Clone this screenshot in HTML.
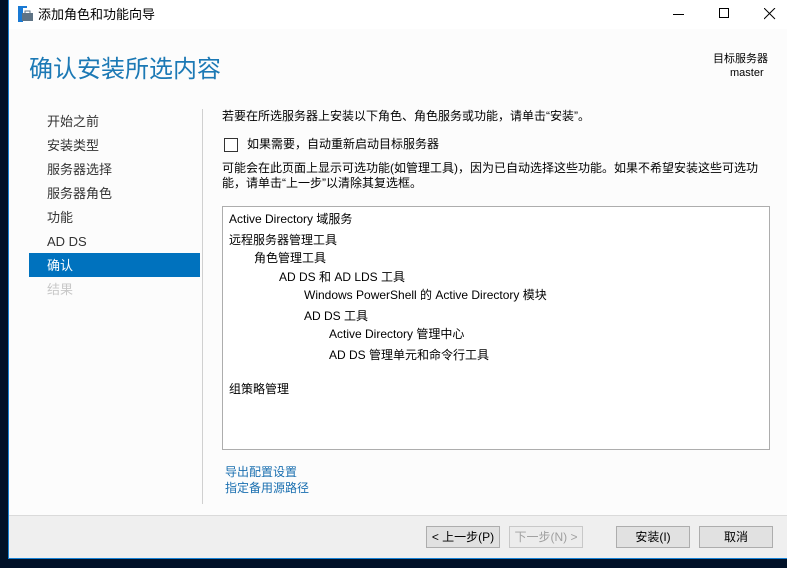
<!DOCTYPE html>
<html><head><meta charset="utf-8"><style>
*{margin:0;padding:0;box-sizing:border-box}
body{width:787px;height:568px;background:#011128;position:relative;overflow:hidden;font-family:"Liberation Sans","Noto Sans CJK SC",sans-serif;font-size:12px;color:#000}
.win{position:absolute;left:8px;top:0;width:790px;height:559px;border-left:1px solid #1883d7;border-bottom:1px solid #1883d7;background:#fcfcfc}
.tb{position:absolute;left:0;top:0;right:0;height:29px;background:#fff}
.a{position:absolute;white-space:nowrap;line-height:16px}
.nav{position:absolute;left:38px;color:#333;font-size:13px;line-height:16px}
.btn{position:absolute;top:526px;height:22px;border:1px solid #adadad;background:#e1e1e1;text-align:center;line-height:20px;font-size:12px}
</style></head><body>
<div class="win">
<div class="tb">
<svg style="position:absolute;left:9px;top:6px" width="16" height="16"><rect x="0" y="0" width="5" height="16" fill="#1a7ad4"/><rect x="5" y="0" width="4" height="2" fill="#1a7ad4"/><rect x="4" y="7" width="11" height="8" fill="#5e7385"/><rect x="7" y="5" width="5" height="3" fill="none" stroke="#5e7385"/></svg>
<div class="a" style="left:29px;top:7px;font-size:13px">添加角色和功能向导</div>
<div style="position:absolute;left:664px;top:14px;width:11px;height:1px;background:#000"></div>
<div style="position:absolute;left:710px;top:8px;width:10px;height:10px;border:1px solid #000"></div>
<svg style="position:absolute;left:755px;top:8px" width="12" height="12"><path d="M0 0L11 11M11 0L0 11" stroke="#000" stroke-width="1"/></svg>
</div>
<div class="a" style="left:20px;top:55px;font-size:24px;line-height:30px;color:#1c79b5">确认安装所选内容</div>
<div class="a" style="left:704px;top:53px;font-size:11px;line-height:13px">目标服务器</div>
<div class="a" style="left:721px;top:67px;font-size:11px;line-height:13px">master</div>
<div style="position:absolute;left:20px;top:253px;width:171px;height:24px;background:#0072be"></div>
<div class="nav" style="top:114px">开始之前</div>
<div class="nav" style="top:138px">安装类型</div>
<div class="nav" style="top:162px">服务器选择</div>
<div class="nav" style="top:186px">服务器角色</div>
<div class="nav" style="top:210px">功能</div>
<div class="nav" style="top:234px">AD DS</div>
<div class="nav" style="top:258px;color:#fff">确认</div>
<div class="nav" style="top:282px;color:#c8c8c8">结果</div>
<div style="position:absolute;left:193px;top:109px;width:1px;height:395px;background:#d0d0d0"></div>
<div class="a" style="left:213px;top:108px">若要在所选服务器上安装以下角色、角色服务或功能，请单击“安装”。</div>
<div style="position:absolute;left:215px;top:138px;width:14px;height:14px;border:1px solid #333;background:#fff"></div>
<div class="a" style="left:238px;top:136px">如果需要，自动重新启动目标服务器</div>
<div class="a" style="left:213px;top:160px">可能会在此页面上显示可选功能(如管理工具)，因为已自动选择这些功能。如果不希望安装这些可选功</div>
<div class="a" style="left:213px;top:175px">能，请单击“上一步”以清除其复选框。</div>
<div style="position:absolute;left:213px;top:206px;width:548px;height:244px;border:1px solid #adadad;background:#fff">
<div class="a" style="left:6px;top:4px">Active Directory 域服务</div>
<div class="a" style="left:6px;top:25px">远程服务器管理工具</div>
<div class="a" style="left:31px;top:43px">角色管理工具</div>
<div class="a" style="left:56px;top:62px">AD DS 和 AD LDS 工具</div>
<div class="a" style="left:81px;top:80px">Windows PowerShell 的 Active Directory 模块</div>
<div class="a" style="left:81px;top:101px">AD DS 工具</div>
<div class="a" style="left:106px;top:119px">Active Directory 管理中心</div>
<div class="a" style="left:106px;top:140px">AD DS 管理单元和命令行工具</div>
<div class="a" style="left:6px;top:174px">组策略管理</div>
</div>
<div class="a" style="left:216px;top:464px;color:#1a6fb0">导出配置设置</div>
<div class="a" style="left:216px;top:480px;color:#1a6fb0">指定备用源路径</div>
<div style="position:absolute;left:0;top:515px;right:0;height:43px;background:#efefef;border-top:1px solid #dadada"></div>
<div class="btn" style="left:417px;width:74px">&lt; 上一步(P)</div>
<div class="btn" style="left:500px;width:74px;color:#a0a0a0;border-color:#c8c8c8;background:#ececec">下一步(N) &gt;</div>
<div class="btn" style="left:607px;width:74px">安装(I)</div>
<div class="btn" style="left:690px;width:74px">取消</div>
</div>
</body></html>
